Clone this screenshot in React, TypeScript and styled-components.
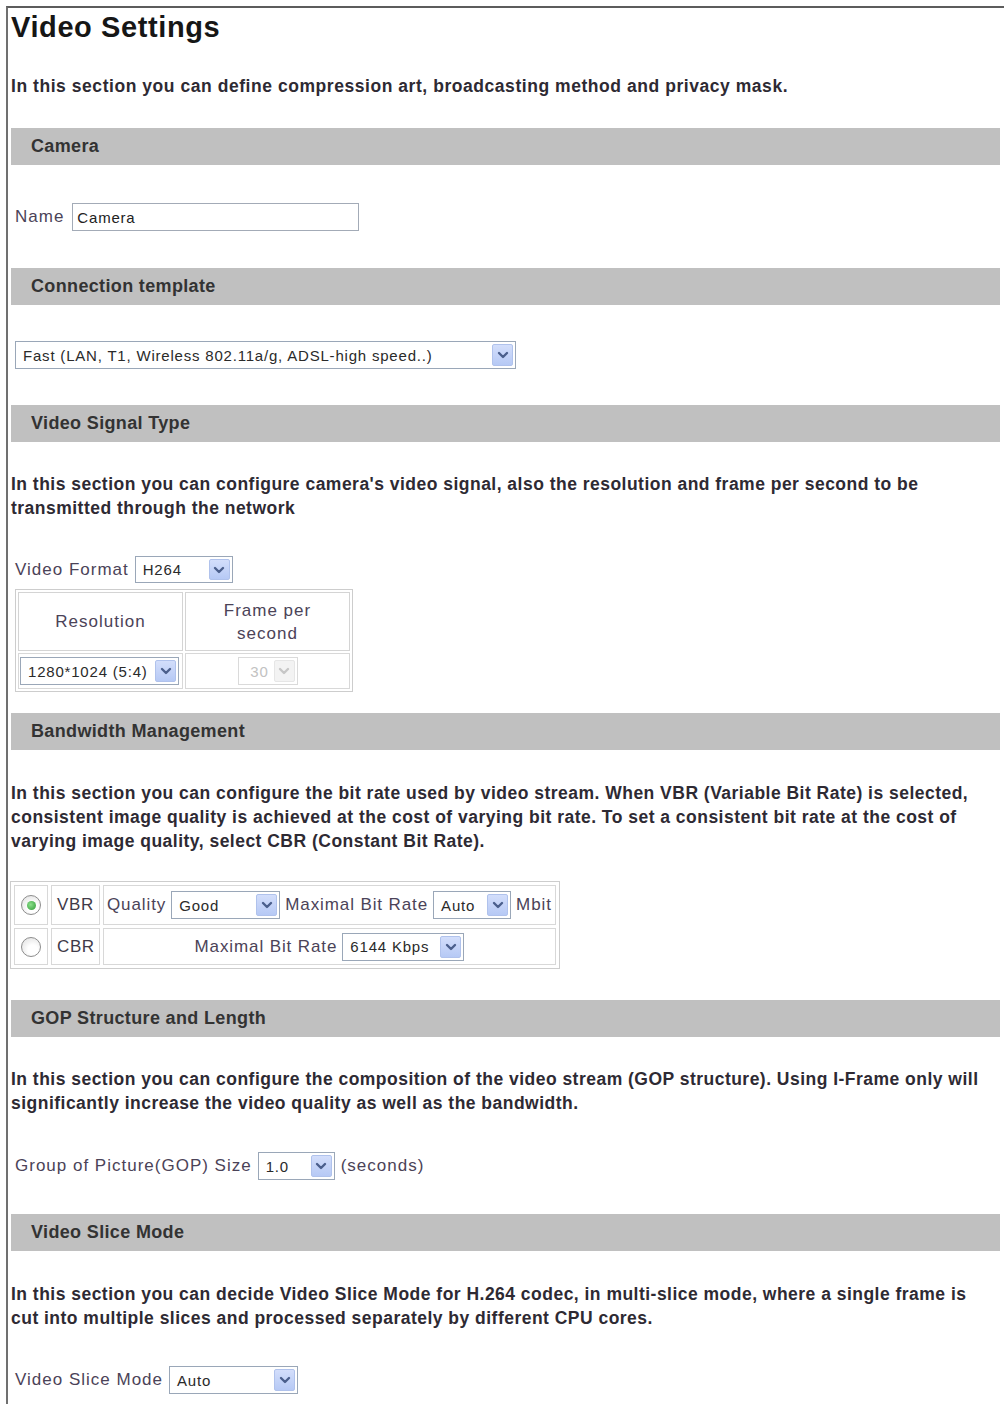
import React from "react";
import styled, { createGlobalStyle, css } from "styled-components";

const GlobalStyle = createGlobalStyle`
  html, body {
    margin: 0;
    padding: 0;
    background: #ffffff;
  }
  body {
    font-family: "Liberation Sans", Arial, sans-serif;
    color: #2b2b2b;
  }
  * {
    box-sizing: border-box;
  }
`;

const labelText = css`
  font-family: "Liberation Sans", Arial, sans-serif;
  font-size: 17px;
  letter-spacing: 1px;
  color: #4b4358;
  font-weight: normal;
`;

const valueText = css`
  font-family: "Liberation Sans", Arial, sans-serif;
  font-size: 15px;
  letter-spacing: 0.8px;
`;

const Frame = styled.div`
  margin: 6px 0 0 6px;
  min-height: 1398px;
  border-top: 2px solid #5c5c5c;
  border-left: 2px solid #707070;
  padding: 0 4px 0 3px;
`;

const Title = styled.h1`
  margin: 2px 0 0;
  font-size: 29px;
  line-height: 34px;
  letter-spacing: 0.6px;
  font-weight: bold;
  color: #161616;
`;

const Paragraph = styled.p`
  margin: 0;
  font-size: 17.5px;
  font-weight: bold;
  letter-spacing: 0.48px;
  line-height: 24px;
  color: #2e2a33;
  white-space: nowrap;
`;

const Intro = styled(Paragraph)`
  margin-top: 30px;
  letter-spacing: 0.55px;
`;

const Section = styled.section<{ $first?: boolean }>`
  margin-top: ${(p) => (p.$first ? 30 : 0)}px;
`;

const SectionBar = styled.div`
  height: 37px;
  display: flex;
  align-items: center;
  padding-left: 20px;
  background: #c0c0c0;
  font-size: 18px;
  font-weight: bold;
  letter-spacing: 0.35px;
  color: #333333;
`;

const SectionBody = styled.div<{ $top: number; $bottom: number }>`
  padding-top: ${(p) => p.$top}px;
  padding-bottom: ${(p) => p.$bottom}px;
`;

const FieldRow = styled.div<{ $mt?: number }>`
  display: flex;
  align-items: center;
  gap: 6px;
  padding-left: 4px;
  margin-top: ${(p) => p.$mt ?? 0}px;
`;

const Label = styled.span`
  ${labelText};
  white-space: nowrap;
`;

const TextInput = styled.input`
  ${valueText};
  width: 287px;
  height: 28px;
  margin-left: 2px;
  padding: 0 4px;
  border: 1px solid #a3abb7;
  color: #222222;
  outline: none;
`;

const SelectBox = styled.div<{ $w: number; $h?: number; $disabled?: boolean }>`
  display: inline-flex;
  align-items: center;
  flex: none;
  width: ${(p) => p.$w}px;
  height: ${(p) => p.$h ?? 28}px;
  padding: 2px;
  background: #ffffff;
  border: 1px solid ${(p) => (p.$disabled ? "#dadada" : "#9aa7b8")};
`;

const SelectValue = styled.span<{ $disabled?: boolean }>`
  ${valueText};
  flex: 1;
  padding-left: 5px;
  white-space: nowrap;
  overflow: hidden;
  color: ${(p) => (p.$disabled ? "#c2c2c2" : "#2a2a2a")};
`;

const SelectArrow = styled.span<{ $disabled?: boolean }>`
  width: 21px;
  height: 100%;
  display: flex;
  align-items: center;
  justify-content: center;
  border-radius: 2px;
  ${(p) =>
    p.$disabled
      ? css`
          background: #f3f3f3;
          border: 1px solid #e6e6e6;
        `
      : css`
          background: linear-gradient(#d3defb, #b6c9f5);
          border: 1px solid #b0c2ec;
        `}
`;

const ResTable = styled.table`
  margin: 6px 0 0 4px;
  border: 1px solid #cdcdcd;
  border-spacing: 2px;
`;

const ResHead = styled.th`
  ${labelText};
  width: 165px;
  height: 59px;
  padding: 0;
  line-height: 23px;
  border: 1px solid #d4d4d4;
  text-align: center;
`;

const ResCell = styled.td<{ $center?: boolean }>`
  height: 36px;
  padding: 0 1px;
  border: 1px solid #d8d8d8;
  text-align: ${(p) => (p.$center ? "center" : "left")};
  vertical-align: middle;
`;

const BwTable = styled.table`
  margin: 28px 0 0 -1px;
  border: 1px solid #cdcdcd;
  border-spacing: 3px;
`;

const BwCell = styled.td<{ $w: number; $h: number; $center?: boolean }>`
  ${labelText};
  width: ${(p) => p.$w}px;
  height: ${(p) => p.$h}px;
  padding: 0 3px;
  border: 1px solid #d8d8d8;
  text-align: ${(p) => (p.$center ? "center" : "left")};
  vertical-align: middle;
`;

const ModeText = styled.span`
  ${labelText};
  letter-spacing: 0.6px;
  color: #3f3a48;
  padding-left: 2px;
`;

const OptionLine = styled.div<{ $center?: boolean }>`
  display: flex;
  align-items: center;
  gap: 5px;
  justify-content: ${(p) => (p.$center ? "center" : "flex-start")};

  ${Label} {
    letter-spacing: 0.9px;
  }
`;

const Radio = styled.span<{ $checked?: boolean }>`
  display: inline-flex;
  align-items: center;
  justify-content: center;
  width: 20px;
  height: 20px;
  border-radius: 50%;
  border: 1px solid #8d8d8d;
  background: radial-gradient(circle at 60% 65%, #ffffff 30%, #dcdcdc 100%);
  vertical-align: middle;

  &::after {
    content: "";
    display: ${(p) => (p.$checked ? "block" : "none")};
    width: 9px;
    height: 9px;
    border-radius: 50%;
    background: radial-gradient(circle at 40% 40%, #8be08b, #2f9a36);
  }
`;

const Chevron = ({ muted }: { muted?: boolean }) => (
  <svg width="12" height="10" viewBox="0 0 12 10">
    <path
      d="M2 3 L6 7 L10 3"
      fill="none"
      stroke={muted ? "#c6c6c6" : "#4b5f8c"}
      strokeWidth="2.4"
      strokeLinecap="round"
      strokeLinejoin="round"
    />
  </svg>
);

type DropdownProps = {
  value: string;
  width: number;
  height?: number;
  disabled?: boolean;
};

const Dropdown = ({ value, width, height, disabled }: DropdownProps) => (
  <SelectBox $w={width} $h={height} $disabled={disabled}>
    <SelectValue $disabled={disabled}>{value}</SelectValue>
    <SelectArrow $disabled={disabled}>
      <Chevron muted={disabled} />
    </SelectArrow>
  </SelectBox>
);

export default function App() {
  return (
    <>
      <GlobalStyle />
      <Frame>
        <Title>Video Settings</Title>
        <Intro>
          In this section you can define compression art, broadcasting method and privacy mask.
        </Intro>

        <Section $first>
          <SectionBar>Camera</SectionBar>
          <SectionBody $top={38} $bottom={37}>
            <FieldRow>
              <Label>Name</Label>
              <TextInput defaultValue="Camera" />
            </FieldRow>
          </SectionBody>
        </Section>

        <Section>
          <SectionBar>Connection template</SectionBar>
          <SectionBody $top={36} $bottom={36}>
            <FieldRow>
              <Dropdown value="Fast (LAN, T1, Wireless 802.11a/g, ADSL-high speed..)" width={501} />
            </FieldRow>
          </SectionBody>
        </Section>

        <Section>
          <SectionBar>Video Signal Type</SectionBar>
          <SectionBody $top={30} $bottom={21}>
            <Paragraph>
              In this section you can configure camera's video signal, also the resolution and frame per second to be
              <br />
              transmitted through the network
            </Paragraph>
            <FieldRow $mt={36}>
              <Label>Video Format</Label>
              <Dropdown value="H264" width={98} height={27} />
            </FieldRow>
            <ResTable>
              <tbody>
                <tr>
                  <ResHead>Resolution</ResHead>
                  <ResHead>
                    Frame per
                    <br />
                    second
                  </ResHead>
                </tr>
                <tr>
                  <ResCell>
                    <Dropdown value="1280*1024 (5:4)" width={159} />
                  </ResCell>
                  <ResCell $center>
                    <Dropdown value="30" width={60} disabled />
                  </ResCell>
                </tr>
              </tbody>
            </ResTable>
          </SectionBody>
        </Section>

        <Section>
          <SectionBar>Bandwidth Management</SectionBar>
          <SectionBody $top={31} $bottom={31}>
            <Paragraph>
              In this section you can configure the bit rate used by video stream. When VBR (Variable Bit Rate) is selected,
              <br />
              consistent image quality is achieved at the cost of varying bit rate. To set a consistent bit rate at the cost of
              <br />
              varying image quality, select CBR (Constant Bit Rate).
            </Paragraph>
            <BwTable>
              <tbody>
                <tr>
                  <BwCell $w={34} $h={40} $center>
                    <Radio $checked />
                  </BwCell>
                  <BwCell $w={49} $h={40}>
                    <ModeText>VBR</ModeText>
                  </BwCell>
                  <BwCell $w={452} $h={40}>
                    <OptionLine>
                      <Label>Quality</Label>
                      <Dropdown value="Good" width={109} />
                      <Label>Maximal Bit Rate</Label>
                      <Dropdown value="Auto" width={78} />
                      <Label>Mbit</Label>
                    </OptionLine>
                  </BwCell>
                </tr>
                <tr>
                  <BwCell $w={34} $h={37} $center>
                    <Radio />
                  </BwCell>
                  <BwCell $w={49} $h={37}>
                    <ModeText>CBR</ModeText>
                  </BwCell>
                  <BwCell $w={452} $h={37}>
                    <OptionLine $center>
                      <Label>Maximal Bit Rate</Label>
                      <Dropdown value="6144 Kbps" width={122} />
                    </OptionLine>
                  </BwCell>
                </tr>
              </tbody>
            </BwTable>
          </SectionBody>
        </Section>

        <Section>
          <SectionBar>GOP Structure and Length</SectionBar>
          <SectionBody $top={30} $bottom={34}>
            <Paragraph>
              In this section you can configure the composition of the video stream (GOP structure). Using I-Frame only will
              <br />
              significantly increase the video quality as well as the bandwidth.
            </Paragraph>
            <FieldRow $mt={37}>
              <Label>Group of Picture(GOP) Size</Label>
              <Dropdown value="1.0" width={77} />
              <Label>(seconds)</Label>
            </FieldRow>
          </SectionBody>
        </Section>

        <Section>
          <SectionBar>Video Slice Mode</SectionBar>
          <SectionBody $top={31} $bottom={12}>
            <Paragraph>
              In this section you can decide Video Slice Mode for H.264 codec, in multi-slice mode, where a single frame is
              <br />
              cut into multiple slices and processed separately by different CPU cores.
            </Paragraph>
            <FieldRow $mt={36}>
              <Label>Video Slice Mode</Label>
              <Dropdown value="Auto" width={129} />
            </FieldRow>
          </SectionBody>
        </Section>
      </Frame>
    </>
  );
}
